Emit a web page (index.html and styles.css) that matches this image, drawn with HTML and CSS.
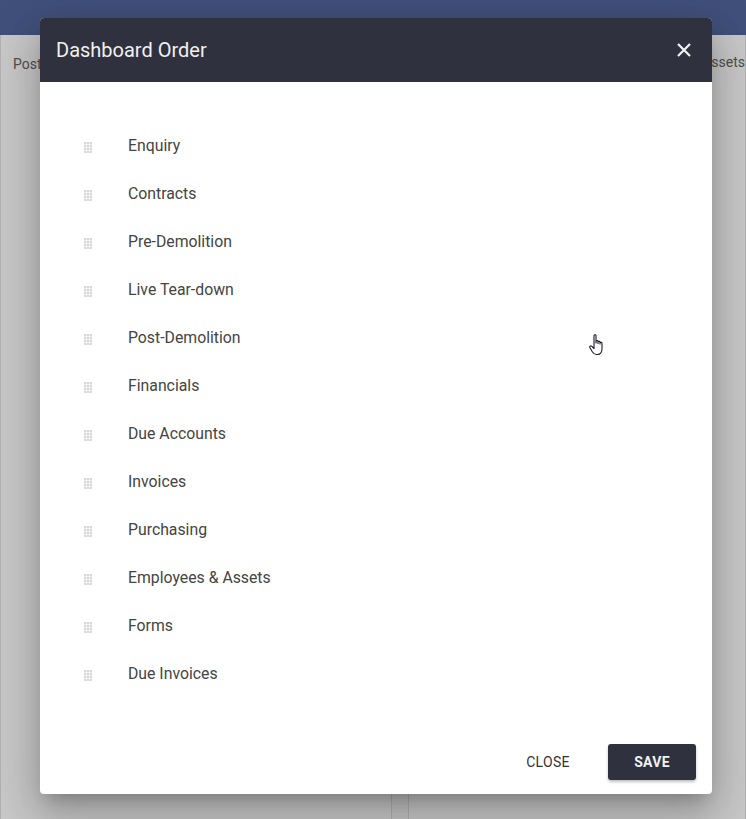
FILE: index.html
```html
<!DOCTYPE html>
<html>
<head>
<meta charset="utf-8">
<link rel="stylesheet" href="styles.css">
</head>
<body>
<div class="page">
  <div class="topbar"></div>
  <div class="content">
    <div class="panel left"><span class="panel-title">Post-Demolition</span></div>
    <div class="panel right"><span class="panel-title right-title">Employees &amp; Assets</span></div>
  </div>
</div>
<div class="overlay"></div>
<div class="dialog">
  <div class="dialog-header">
    <span class="dialog-title">Dashboard Order</span>
    <svg class="close-x" width="16" height="16" viewBox="0 0 16 16"><path d="M2 2 L14 14 M14 2 L2 14" stroke="#f2f2f2" stroke-width="2.2" fill="none"/></svg>
  </div>
  <ul class="order-list">
    <li><span class="handle"></span><span class="label">Enquiry</span></li>
    <li><span class="handle"></span><span class="label">Contracts</span></li>
    <li><span class="handle"></span><span class="label">Pre-Demolition</span></li>
    <li><span class="handle"></span><span class="label">Live Tear-down</span></li>
    <li><span class="handle"></span><span class="label">Post-Demolition</span></li>
    <li><span class="handle"></span><span class="label">Financials</span></li>
    <li><span class="handle"></span><span class="label">Due Accounts</span></li>
    <li><span class="handle"></span><span class="label">Invoices</span></li>
    <li><span class="handle"></span><span class="label">Purchasing</span></li>
    <li><span class="handle"></span><span class="label">Employees &amp; Assets</span></li>
    <li><span class="handle"></span><span class="label">Forms</span></li>
    <li><span class="handle"></span><span class="label">Due Invoices</span></li>
  </ul>
  <div class="dialog-footer">
    <button class="btn btn-text">CLOSE</button>
    <button class="btn btn-primary">SAVE</button>
  </div>
  <svg class="cursor" width="20" height="24" viewBox="0 0 20 24">
    <path d="M6 2.5 C6 1.4 8 1.4 8 2.5 L8 10 L8 8.2 C8 7.2 10 7.2 10 8.2 L10 10.5 L10 9 C10 8 12 8 12 9 L12 11 L12 10 C12 9 14 9 14 10 L14 15.5 C14 19 12.5 21.5 9.5 21.5 L8.5 21.5 C6.5 21.5 5.5 20.5 4.5 19 L1.8 14.5 C1.2 13.5 2.6 12.3 3.6 13.2 L6 15.5 Z" fill="#fff" stroke="#1a1a2a" stroke-width="1.1" stroke-linejoin="round"/>
  </svg>
</div>
</body>
</html>
```
FILE: styles.css
```css
html, body {
  margin: 0;
  padding: 0;
}
body {
  width: 746px;
  height: 819px;
  overflow: hidden;
  position: relative;
  font-family: Roboto, "Liberation Sans", sans-serif;
  background: #fff;
}
.page {
  width: 746px;
  height: 819px;
  display: flex;
  flex-direction: column;
}
.topbar {
  height: 35px;
  background: #53669d;
  flex: none;
}
.content {
  flex: 1;
  display: grid;
  grid-template-columns: 392px 1fr;
  gap: 16px;
  background: #fafafa;
}
.panel {
  background: #fff;
  border-right: 1px solid #e2e2e2;
  border-left: 1px solid #e2e2e2;
  padding: 19px 0 0 12px;
}
.panel.right {
  padding: 19px 0 0 0;
  overflow: hidden;
  display: flex;
  justify-content: flex-end;
}
.panel-title {
  font-size: 14px;
  color: #666;
  white-space: nowrap;
}
.overlay {
  position: absolute;
  inset: 0;
  background: rgba(0, 0, 0, 0.215);
}
.dialog {
  position: absolute;
  left: 40px;
  top: 18px;
  width: 672px;
  height: 776px;
  background: #fff;
  border-radius: 4px;
  overflow: hidden;
  display: flex;
  flex-direction: column;
  box-shadow: 0 11px 15px -7px rgba(0,0,0,.2), 0 24px 38px 3px rgba(0,0,0,.14), 0 9px 46px 8px rgba(0,0,0,.12);
}
.dialog-header {
  height: 64px;
  flex: none;
  background: #2f313f;
  display: flex;
  align-items: center;
  justify-content: space-between;
  padding: 0 20px 0 16px;
}
.dialog-title {
  font-size: 20px;
  color: #f0f0f0;
}
.close-x {
  display: block;
}
.order-list {
  list-style: none;
  margin: 0;
  padding: 39px 0 0 0;
  flex: 1;
}
.order-list li {
  height: 48px;
  display: flex;
  align-items: center;
  padding-left: 44px;
}
.handle {
  width: 8px;
  height: 11px;
  margin-top: 5px;
  background-image: radial-gradient(circle, #a0a0a0 0.8px, transparent 1.1px);
  background-size: 3px 3px;
  background-position: -0.5px -0.5px;
  flex: none;
}
.label {
  margin-left: 36px;
  font-size: 15.8px;
  color: #444;
}
.dialog-footer {
  flex: none;
  display: flex;
  justify-content: flex-end;
  align-items: center;
  gap: 20px;
  padding: 0 16px 14px 0;
}
.btn {
  font-family: Roboto, "Liberation Sans", sans-serif;
  font-size: 14px;
  border: none;
  height: 36px;
  border-radius: 3px;
  cursor: pointer;
  letter-spacing: 0.3px;
}
.btn-text {
  background: transparent;
  color: #333;
  font-weight: 400;
  width: 80px;
  padding: 0;
}
.btn-primary {
  background: #2f313f;
  color: #f2f2f2;
  width: 88px;
  font-weight: 700;
  box-shadow: 0 2px 3px rgba(0,0,0,.25);
}
.cursor {
  position: absolute;
  left: 548px;
  top: 315px;
}
```
